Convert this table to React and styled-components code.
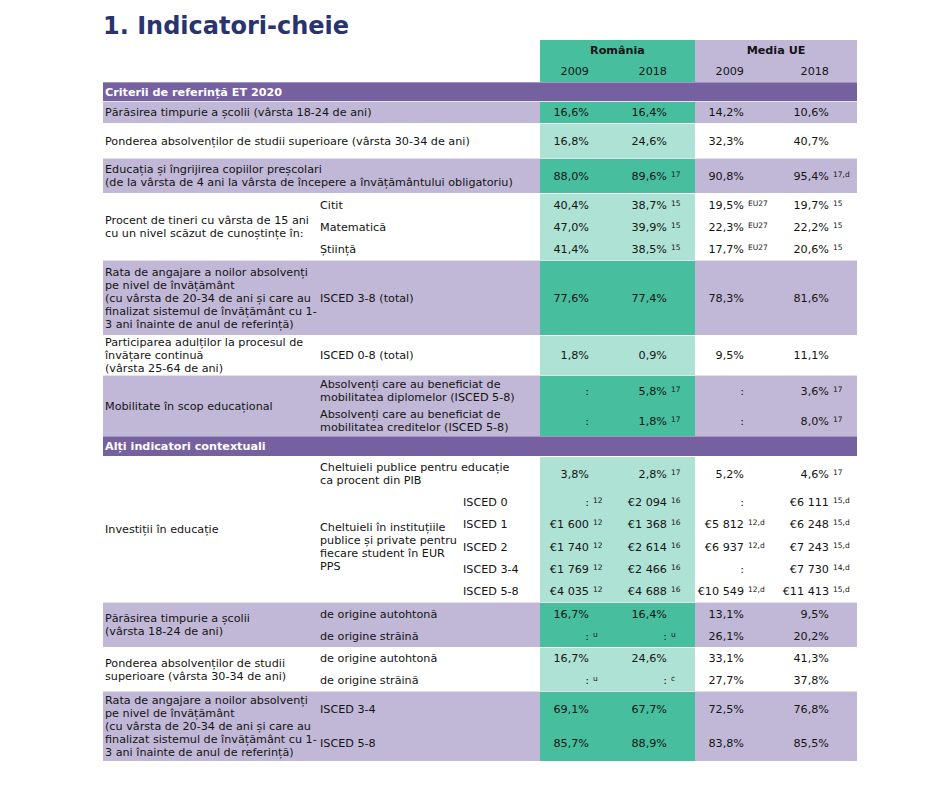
import React from 'react'
import styled, { createGlobalStyle } from 'styled-components'

const purple = '#7560a0'
const lavender = '#c1b8d7'
const green = '#47bf9f'
const mint = '#aee2d5'
const navy = '#28336f'

const COLS = '215px 143px 79px 77px 78px 81px 81px'
const WIDTHS = [49, 50, 49, 53]

const GlobalStyle = createGlobalStyle`
  body {
    margin: 0;
    background: #fff;
    color: #141414;
    font-family: 'DejaVu Sans', Verdana, sans-serif;
  }
`
const Page = styled.div`
  width: 754px;
  padding: 13px 0 0 103px;
`
const Title = styled.h1`
  margin: 0;
  font-size: 24px;
  line-height: 27px;
  font-weight: bold;
  color: ${navy};
`
const Table = styled.div`
  display: flex;
  flex-direction: column;
  font-size: 11.2px;
  line-height: 13px;
`
const Block = styled.div`
  display: grid;
  grid-template-columns: ${COLS};
  grid-template-rows: ${(p) => p.$rows};
  background: ${(p) => (p.$shade ? lavender : '#fff')};
  border-top: ${(p) => (p.$sep ? '1px solid rgba(255,255,255,0.55)' : 'none')};
`
const SectionBar = styled.div`
  box-sizing: border-box;
  height: ${(p) => p.$h}px;
  display: flex;
  align-items: center;
  padding-left: 2px;
  background: ${purple};
  border-top: 1px solid rgba(255, 255, 255, 0.35);
  color: #fff;
  font-weight: bold;
`
const Label = styled.div`
  grid-column: ${(p) => (p.$wide ? '1 / 4' : '1')};
  grid-row: 1 / span ${(p) => p.$span};
  align-self: center;
  padding: 0 2px;
  white-space: pre;
`
const SubLabel = styled.div`
  grid-column: ${(p) => p.$col};
  grid-row: ${(p) => p.$row};
  align-self: center;
  padding-left: 2px;
  white-space: pre;
`
const Cell = styled.div`
  grid-column: ${(p) => p.$col};
  grid-row: ${(p) => p.$row};
  display: flex;
  align-items: center;
  justify-content: ${(p) => (p.$center ? 'center' : 'flex-start')};
  background: ${(p) => p.$bg || 'transparent'};
  font-weight: ${(p) => (p.$bold ? 'bold' : 'normal')};
  white-space: nowrap;
`
const Num = styled.span`
  display: inline-block;
  width: ${(p) => p.$w}px;
  text-align: right;
`
const Sup = styled.span`
  margin-left: 4px;
  font-size: 7.5px;
  line-height: 0;
  vertical-align: 3px;
`

const shadeCols = (shade) => [shade ? green : mint, shade ? green : mint, null, null]

function Values({ row, vals, shade }) {
  const bgs = shadeCols(shade)
  return vals.map(([v, s], i) => (
    <Cell key={i} $col={4 + i} $row={row} $bg={bgs[i]}>
      <span>
        <Num $w={WIDTHS[i]}>{v}</Num>
        {s && <Sup>{s}</Sup>}
      </span>
    </Cell>
  ))
}

const rataText =
  'Rata de angajare a noilor absolvenți\npe nivel de învățământ\n(cu vârsta de 20-34 de ani și care au\nfinalizat sistemul de învățământ cu 1-\n3 ani înainte de anul de referință)'

const blocks = [
  { section: 'Criterii de referință ET 2020', h: 19 },
  {
    shade: true,
    rows: '21px',
    label: 'Părăsirea timpurie a școlii (vârsta 18-24 de ani)',
    wide: true,
    lines: [{ vals: [['16,6%'], ['16,4%'], ['14,2%'], ['10,6%']] }],
  },
  {
    rows: '34px',
    label: 'Ponderea absolvenților de studii superioare (vârsta 30-34 de ani)',
    wide: true,
    lines: [{ vals: [['16,8%'], ['24,6%'], ['32,3%'], ['40,7%']] }],
  },
  {
    shade: true,
    rows: '34px',
    label:
      'Educația și îngrijirea copiilor preșcolari\n(de la vârsta de 4 ani la vârsta de începere a învățământului obligatoriu)',
    wide: true,
    lines: [{ vals: [['88,0%'], ['89,6%', '17'], ['90,8%'], ['95,4%', '17,d']] }],
  },
  {
    rows: '22px 22px 22px',
    label: 'Procent de tineri cu vârsta de 15 ani\ncu un nivel scăzut de cunoștințe în:',
    lines: [
      { sub: 'Citit', vals: [['40,4%'], ['38,7%', '15'], ['19,5%', 'EU27'], ['19,7%', '15']] },
      { sub: 'Matematică', vals: [['47,0%'], ['39,9%', '15'], ['22,3%', 'EU27'], ['22,2%', '15']] },
      { sub: 'Știință', vals: [['41,4%'], ['38,5%', '15'], ['17,7%', 'EU27'], ['20,6%', '15']] },
    ],
  },
  {
    shade: true,
    rows: '74px',
    label: rataText,
    lines: [{ sub: 'ISCED 3-8 (total)', vals: [['77,6%'], ['77,4%'], ['78,3%'], ['81,6%']] }],
  },
  {
    rows: '39px',
    label: 'Participarea adulților la procesul de\nînvățare continuă\n(vârsta 25-64 de ani)',
    lines: [{ sub: 'ISCED 0-8 (total)', vals: [['1,8%'], ['0,9%'], ['9,5%'], ['11,1%']] }],
  },
  {
    shade: true,
    rows: '30px 30px',
    label: 'Mobilitate în scop educațional',
    lines: [
      {
        sub: 'Absolvenți care au beneficiat de\nmobilitatea diplomelor (ISCED 5-8)',
        vals: [[':'], ['5,8%', '17'], [':'], ['3,6%', '17']],
      },
      {
        sub: 'Absolvenți care au beneficiat de\nmobilitatea creditelor (ISCED 5-8)',
        vals: [[':'], ['1,8%', '17'], [':'], ['8,0%', '17']],
      },
    ],
  },
  { section: 'Alți indicatori contextuali', h: 20 },
  {
    rows: '34px 22px 23px 22px 22px 22px',
    label: 'Investiții în educație',
    group: { text: 'Cheltuieli în instituțiile\npublice și private pentru\nfiecare student în EUR\nPPS', from: 2, span: 5 },
    lines: [
      {
        sub: 'Cheltuieli publice pentru educație\nca procent din PIB',
        vals: [['3,8%'], ['2,8%', '17'], ['5,2%'], ['4,6%', '17']],
      },
      { isced: 'ISCED 0', vals: [[':', '12'], ['€2 094', '16'], [':'], ['€6 111', '15,d']] },
      { isced: 'ISCED 1', vals: [['€1 600', '12'], ['€1 368', '16'], ['€5 812', '12,d'], ['€6 248', '15,d']] },
      { isced: 'ISCED 2', vals: [['€1 740', '12'], ['€2 614', '16'], ['€6 937', '12,d'], ['€7 243', '15,d']] },
      { isced: 'ISCED 3-4', vals: [['€1 769', '12'], ['€2 466', '16'], [':'], ['€7 730', '14,d']] },
      { isced: 'ISCED 5-8', vals: [['€4 035', '12'], ['€4 688', '16'], ['€10 549', '12,d'], ['€11 413', '15,d']] },
    ],
  },
  {
    shade: true,
    rows: '22px 22px',
    label: 'Părăsirea timpurie a școlii\n(vârsta 18-24 de ani)',
    lines: [
      { sub: 'de origine autohtonă', vals: [['16,7%'], ['16,4%'], ['13,1%'], ['9,5%']] },
      { sub: 'de origine străină', vals: [[':', 'u'], [':', 'u'], ['26,1%'], ['20,2%']] },
    ],
  },
  {
    rows: '21px 22px',
    label: 'Ponderea absolvenților de studii\nsuperioare (vârsta 30-34 de ani)',
    lines: [
      { sub: 'de origine autohtonă', vals: [['16,7%'], ['24,6%'], ['33,1%'], ['41,3%']] },
      { sub: 'de origine străină', vals: [[':', 'u'], [':', 'c'], ['27,7%'], ['37,8%']] },
    ],
  },
  {
    shade: true,
    rows: '34px 35px',
    label: rataText,
    lines: [
      { sub: 'ISCED 3-4', vals: [['69,1%'], ['67,7%'], ['72,5%'], ['76,8%']] },
      { sub: 'ISCED 5-8', vals: [['85,7%'], ['88,9%'], ['83,8%'], ['85,5%']] },
    ],
  },
]

function Header() {
  return (
    <Block $rows='20px 22px'>
      <Cell $col='4 / 6' $row={1} $bg={green} $center $bold>
        România
      </Cell>
      <Cell $col='6 / 8' $row={1} $bg={lavender} $center $bold>
        Media UE
      </Cell>
      {['2009', '2018', '2009', '2018'].map((y, i) => (
        <Cell key={i} $col={4 + i} $row={2} $bg={i < 2 ? green : lavender}>
          <Num $w={WIDTHS[i]}>{y}</Num>
        </Cell>
      ))}
    </Block>
  )
}

function DataBlock({ b }) {
  return (
    <Block $rows={b.rows} $shade={b.shade} $sep>
      <Label $wide={b.wide} $span={b.lines.length}>
        {b.label}
      </Label>
      {b.group && (
        <SubLabel $col={2} $row={`${b.group.from} / span ${b.group.span}`}>
          {b.group.text}
        </SubLabel>
      )}
      {b.lines.map((l, r) => (
        <React.Fragment key={r}>
          {l.sub && (
            <SubLabel $col='2 / 4' $row={r + 1}>
              {l.sub}
            </SubLabel>
          )}
          {l.isced && (
            <SubLabel $col={3} $row={r + 1}>
              {l.isced}
            </SubLabel>
          )}
          <Values row={r + 1} vals={l.vals} shade={b.shade} />
        </React.Fragment>
      ))}
    </Block>
  )
}

export default function App() {
  return (
    <Page>
      <GlobalStyle />
      <Title>1. Indicatori-cheie</Title>
      <Table>
        <Header />
        {blocks.map((b, i) =>
          b.section ? (
            <SectionBar key={i} $h={b.h}>
              {b.section}
            </SectionBar>
          ) : (
            <DataBlock key={i} b={b} />
          )
        )}
      </Table>
    </Page>
  )
}
